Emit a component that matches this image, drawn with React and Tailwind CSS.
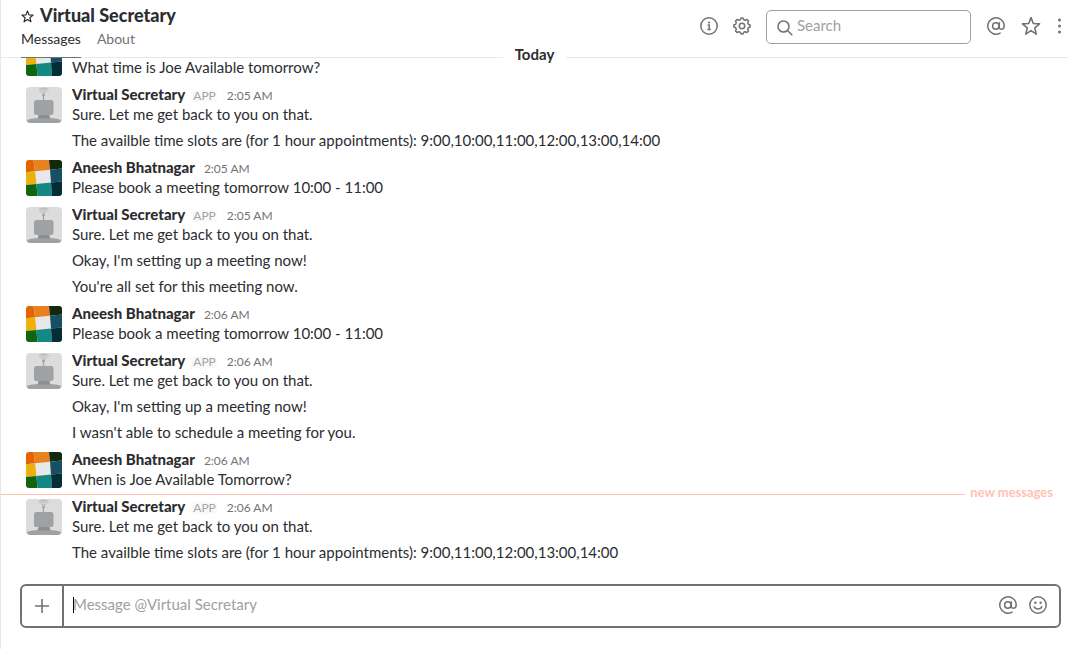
import React from "react";

const messages = [
  { from: "user", lines: ["What time is Joe Available tomorrow?"] },
  {
    from: "bot",
    time: "2:05 AM",
    lines: [
      "Sure. Let me get back to you on that.",
      "The availble time slots are (for 1 hour appointments): 9:00,10:00,11:00,12:00,13:00,14:00",
    ],
  },
  { from: "user", time: "2:05 AM", lines: ["Please book a meeting tomorrow 10:00 - 11:00"] },
  {
    from: "bot",
    time: "2:05 AM",
    lines: [
      "Sure. Let me get back to you on that.",
      "Okay, I'm setting up a meeting now!",
      "You're all set for this meeting now.",
    ],
  },
  { from: "user", time: "2:06 AM", lines: ["Please book a meeting tomorrow 10:00 - 11:00"] },
  {
    from: "bot",
    time: "2:06 AM",
    lines: [
      "Sure. Let me get back to you on that.",
      "Okay, I'm setting up a meeting now!",
      "I wasn't able to schedule a meeting for you.",
    ],
  },
  { from: "user", time: "2:06 AM", lines: ["When is Joe Available Tomorrow?"] },
  {
    from: "bot",
    time: "2:06 AM",
    unread: true,
    lines: [
      "Sure. Let me get back to you on that.",
      "The availble time slots are (for 1 hour appointments): 9:00,11:00,12:00,13:00,14:00",
    ],
  },
];

function UserAvatar() {
  return (
    <svg viewBox="0 0 36 36" className="size-9 rounded-[3px]" aria-hidden="true">
      <rect width="36" height="36" fill="#e8e8ea" />
      <path d="M0 0H7.5L9 11.3L0 12.3Z" fill="#e36400" />
      <path d="M7.5 0H23L24 9.7L9 11.3Z" fill="#e7821f" />
      <path d="M23 0H36V8.6L24 9.7Z" fill="#12290f" />
      <path d="M0 12.3L9 11.3L10.4 24L0 25Z" fill="#ecb10f" />
      <path d="M24 9.7L36 8.6V21.6L25 22.6Z" fill="#175065" />
      <path d="M0 25L10.4 24L11.5 36H0Z" fill="#12650f" />
      <path d="M10.4 24L25 22.6L26 36H11.5Z" fill="#148984" />
      <path d="M25 22.6L36 21.6V36H26Z" fill="#042d38" />
    </svg>
  );
}

function BotAvatar() {
  return (
    <svg viewBox="0 0 36 36" className="size-9 rounded-[4px]" aria-hidden="true">
      <rect width="36" height="36" fill="#dcdcdc" />
      <path d="M0.500 33.500C3 31.400 10 31 18 31s15 .4 17.500 2.500L33 36H3Z" fill="#9ea2a5" />
      <path d="M13 27h10l1.500 4.500h-13Z" fill="#8b8f92" />
      <rect x="8" y="13" width="19.500" height="15" rx="2.500" fill="#9ea2a5" />
      <path d="M17.500 7v6" stroke="#9ea2a5" strokeWidth="1.200" />
      <circle cx="17.500" cy="8" r="1.400" fill="#9ea2a5" />
      <path
        d="M15.300 6a3.200 3.200 0 0 1 4.400 0M13.800 4.400a5.600 5.600 0 0 1 7.400 0M12.400 2.900a7.800 7.800 0 0 1 10.200 0"
        fill="none"
        stroke="#a9acae"
        strokeWidth=".9"
      />
    </svg>
  );
}

function InfoIcon() {
  return (
    <svg viewBox="0 0 18 18" className="size-[18px]" fill="none" stroke="currentColor" strokeWidth="1.500">
      <circle cx="9" cy="9" r="8.200" />
      <path d="M7.600 8H9.200V12.500M7.400 12.500H10.800" />
      <circle cx="9" cy="5.500" r="1.100" fill="currentColor" stroke="none" />
    </svg>
  );
}

function GearIcon() {
  return (
    <svg viewBox="0 0 18 18" className="size-[18px]" fill="none" stroke="currentColor" strokeWidth="1.500" strokeLinejoin="round">
      <path d="M7.300 2.700L8 .9h2l.7 1.800 1.500.6 1.800-.8 1.500 1.500-.8 1.800.6 1.500 1.800.7v2l-1.800.7-.6 1.500.8 1.800-1.500 1.500-1.800-.8-1.500.6-.7 1.800H8l-.7-1.800-1.500-.6-1.800.8L2.500 14l.8-1.800-.6-1.500L.9 10V8l1.800-.7.6-1.500L2.500 4 4 2.500l1.800.8Z" />
      <circle cx="9" cy="9" r="2.700" />
    </svg>
  );
}

function AtIcon() {
  return (
    <svg viewBox="0 0 18 18" className="size-[18px]" fill="none" stroke="currentColor" strokeWidth="1.500" strokeLinecap="round">
      <circle cx="8.800" cy="9" r="3.200" />
      <path d="M12.300 5.800V10.500c0 2.400 4.900 2.500 4.900-1.500A8.200 8.200 0 1 0 13.100 16.100" />
    </svg>
  );
}

function StarIcon({ className }) {
  return (
    <svg viewBox="0 0 20 20" className={className} fill="none" stroke="currentColor" strokeLinejoin="round">
      <path d="M10 1.600L12.300 7.500L18.600 7.900L13.700 11.900L15.300 18.100L10 14.600L4.700 18.100L6.300 11.900L1.400 7.900L7.700 7.500Z" />
    </svg>
  );
}

function SmileIcon() {
  return (
    <svg viewBox="0 0 18 18" className="size-[18px]" fill="none" stroke="currentColor" strokeWidth="1.500" strokeLinecap="round">
      <circle cx="9" cy="9" r="8.200" />
      <path d="M5.200 10.800C6.500 13.800 11.500 13.800 12.800 10.800" />
      <circle cx="6.400" cy="6.800" r="1.200" fill="currentColor" stroke="none" />
      <circle cx="11.600" cy="6.800" r="1.200" fill="currentColor" stroke="none" />
    </svg>
  );
}

function Message({ from, time, lines, unread }) {
  const isBot = from === "bot";
  return (
    <li className="relative flex shrink-0 gap-2.5 pl-[25px]">
      {unread && (
        <div className="absolute inset-x-0 -top-[11px] flex h-4 items-start gap-[5px] pr-[15px] text-[13px] font-bold leading-[14px] text-[#ffc1b3]">
          <span className="mt-[9px] flex-1 border-t border-[#ffc1b3]" />
          new messages
        </div>
      )}
      <div className="shrink-0 pt-[3px]">{isBot ? <BotAvatar /> : <UserAvatar />}</div>
      <div className="min-w-0 flex-1">
        <div className="flex h-5 items-baseline text-[15px] leading-5">
          {time && (
            <>
              <a href="#" className="font-black">{isBot ? "Virtual Secretary" : "Aneesh Bhatnagar"}</a>
              {isBot && (
                <span className="ml-[7px] rounded-sm bg-[#f9f9f9] px-px text-xs leading-3 text-[#a3a4a6]">APP</span>
              )}
              <span className={isBot ? "ml-2.5 text-xs text-[#717274]" : "ml-[9px] text-xs text-[#717274]"}>{time}</span>
            </>
          )}
        </div>
        <div className="flex flex-col gap-1.5 text-[15px] leading-5">
          {lines.map((line) => (
            <p key={line}>{line}</p>
          ))}
        </div>
      </div>
    </li>
  );
}

export default function App() {
  return (
    <div className="flex h-screen flex-col border-l border-[#e8e8e8] bg-white font-['Lato',sans-serif] text-[#2c2d30]">
      {/* Header */}
      <header className="relative z-10 flex shrink-0 justify-between border-b border-[#e8e8e8] bg-white pl-5">
        <div>
          <div className="flex h-[30px] items-center gap-1.5">
            <button aria-label="Star conversation" className="pt-0.5">
              <StarIcon className="size-[13px] stroke-[1.8]" />
            </button>
            <h1 className="text-lg font-black leading-6">Virtual Secretary</h1>
          </div>
          <nav className="-mb-px flex h-7 gap-4 text-sm">
            <a href="#" className="border-b border-[#717274] leading-[18px]">Messages</a>
            <a href="#" className="leading-[18px] text-[#717274]">About</a>
          </nav>
        </div>
        <div className="flex h-[54px] items-center text-[#717274]">
          <button aria-label="Details" className="mr-[15px] pb-0.5"><InfoIcon /></button>
          <button aria-label="Settings" className="mr-[15px] pb-0.5"><GearIcon /></button>
          <label className="mr-4 flex h-[34px] w-[205px] items-center gap-1 rounded-[5px] border border-[#a0a0a2] pl-2.5">
            <svg viewBox="0 0 18 18" className="mt-0.5 size-4 shrink-0" fill="none" stroke="currentColor" strokeWidth="1.700">
              <circle cx="7.300" cy="7.300" r="6.200" />
              <path d="M11.800 11.800L17.200 17.200" />
            </svg>
            <input
              type="text"
              aria-label="Search"
              placeholder="Search"
              className="w-full min-w-0 bg-transparent pb-1 text-[15px] leading-5 outline-none placeholder:text-[#a0a0a2]"
            />
          </label>
          <button aria-label="Mentions" className="mr-4 pb-0.5"><AtIcon /></button>
          <button aria-label="Starred items" className="mr-4 pb-0.5"><StarIcon className="size-5 stroke-[1.6]" /></button>
          <button aria-label="More" className="mr-[7px] pb-0.5">
            <svg viewBox="0 0 4 16" className="h-4 w-1" fill="currentColor">
              <circle cx="2.500" cy="2" r="1.500" />
              <circle cx="2.500" cy="8" r="1.500" />
              <circle cx="2.500" cy="14" r="1.500" />
            </svg>
          </button>
        </div>
        <div className="absolute inset-x-0 -bottom-[7px] flex justify-center">
          <span className="bg-white px-3 text-[15px] font-bold leading-5">Today</span>
        </div>
      </header>

      {/* Conversation */}
      <ul className="flex min-h-0 flex-1 flex-col justify-end gap-[7px] overflow-hidden pb-[22px]">
        {messages.map((message, i) => (
          <Message key={i} {...message} />
        ))}
      </ul>

      {/* Composer */}
      <form className="mb-[21px] ml-[19px] mr-[7px] flex h-11 shrink-0 items-stretch rounded-md border-2 border-[#717274] text-[#717274]">
        <button type="button" aria-label="Add attachment" className="flex w-[42px] items-center justify-center border-r-2 border-[#717274]">
          <svg viewBox="0 0 14 14" className="size-3.5" stroke="currentColor" strokeWidth="1.600">
            <path d="M7 0V14M0 7H14" />
          </svg>
        </button>
        <div className="flex flex-1 items-center pb-0.5 pl-[9px]">
          <span className="-mr-px h-4 w-px bg-black" />
          <input
            type="text"
            aria-label="Message @Virtual Secretary"
            placeholder="Message @Virtual Secretary"
            className="w-full bg-transparent pb-0.5 text-[15px] leading-5 outline-none placeholder:text-[#a0a0a2]"
          />
        </div>
        <button type="button" aria-label="Mention someone" className="mr-3 pb-0.5"><AtIcon /></button>
        <button type="button" aria-label="Emoji" className="mr-3 pb-0.5"><SmileIcon /></button>
      </form>
    </div>
  );
}
